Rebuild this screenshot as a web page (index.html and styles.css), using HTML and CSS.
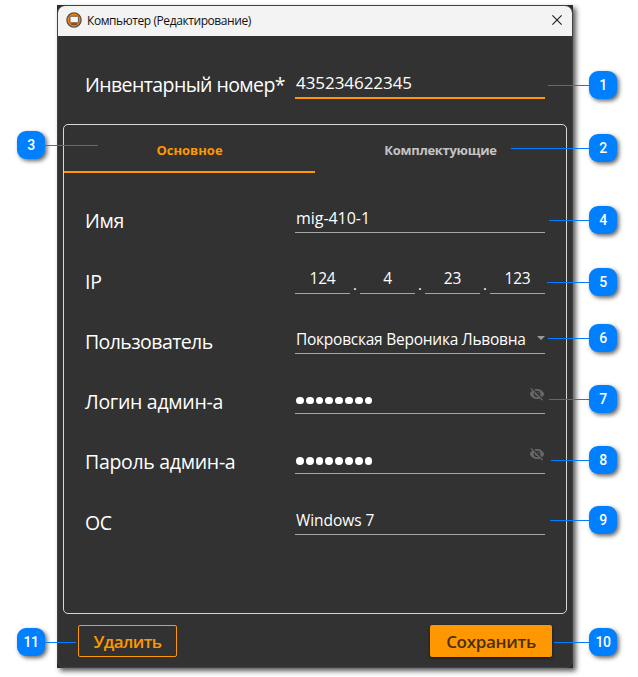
FILE: index.html
```html
<!DOCTYPE html>
<html lang="ru">
<head>
<meta charset="utf-8">
<title>Компьютер (Редактирование)</title>
<link rel="stylesheet" href="styles.css">
</head>
<body>
<svg class="defs" width="0" height="0">
  <symbol id="eye-off" viewBox="0 0 24 24"><path d="M11.83 9L15 12.16V12a3 3 0 0 0-3-3h-.17m-4.3.8l1.55 1.55c-.05.21-.08.42-.08.65a3 3 0 0 0 3 3c.22 0 .44-.03.65-.08l1.55 1.55c-.67.33-1.41.53-2.2.53a5 5 0 0 1-5-5c0-.79.2-1.53.53-2.2M2 4.27l2.28 2.28.45.45C3.08 8.3 1.78 10 1 12c1.73 4.39 6 7.5 11 7.5 1.55 0 3.03-.3 4.38-.84l.43.42L19.73 22 21 20.73 3.27 3M12 7a5 5 0 0 1 5 5c0 .64-.13 1.26-.36 1.82l2.93 2.93c1.5-1.25 2.7-2.89 3.43-4.75-1.73-4.39-6-7.5-11-7.5-1.4 0-2.74.25-4 .7l2.17 2.15C10.74 7.13 11.35 7 12 7z"/></symbol>
</svg>
<div class="window-back">
<main class="window">
  <header class="titlebar">
    <svg class="logo" viewBox="0 0 16 16"><circle cx="8" cy="8" r="7.1" fill="#ff7f0a" stroke="#54504a" stroke-width="1.3"/><rect x="4" y="4.2" width="8.4" height="6.6" rx=".8" fill="#f4f6f8" stroke="#5b4634" stroke-width=".9"/><path d="M5.3 12.2h5.6" stroke="#4a3a2c" stroke-width="1.3"/></svg>
    <span class="title">Компьютер (Редактирование)</span>
    <svg class="close" viewBox="0 0 10 10"><path d="M.4.4l9.2 9.2M9.6.4L.4 9.6" stroke="#1a1a1a" stroke-width="1.1"/></svg>
  </header>
  <div class="row number-row">
    <label class="label tight l-number">Инвентарный номер*</label>
    <div class="field active">435234622345</div>
  </div>
  <section class="panel">
    <nav class="tabs">
      <div class="tab selected">Основное</div>
      <div class="tab">Комплектующие</div>
    </nav>
    <div class="rows">
      <div class="row"><label class="label">Имя</label><div class="field name">mig-410-1</div></div>
      <div class="row"><label class="label">IP</label>
        <div class="ip">
          <div class="field octet">124</div><span class="dot">.</span>
          <div class="field octet">4</div><span class="dot">.</span>
          <div class="field octet">23</div><span class="dot">.</span>
          <div class="field octet">123</div>
        </div>
      </div>
      <div class="row"><label class="label tight">Пользователь</label><div class="field select"><span class="user">Покровская Вероника Львовна</span><svg class="arrow" viewBox="0 0 8 4"><path d="M0 0h8L4 4z" fill="#9a9a9a"/></svg></div></div>
      <div class="row"><label class="label">Логин админ-а</label><div class="field secret"><span class="dots"><i></i><i></i><i></i><i></i><i></i><i></i><i></i><i></i></span><svg class="eye"><use href="#eye-off"/></svg></div></div>
      <div class="row"><label class="label">Пароль админ-а</label><div class="field secret"><span class="dots"><i></i><i></i><i></i><i></i><i></i><i></i><i></i><i></i></span><svg class="eye"><use href="#eye-off"/></svg></div></div>
      <div class="row"><label class="label">ОС</label><div class="field os">Windows 7</div></div>
    </div>
  </section>
  <footer class="actions">
    <div class="btn outline">Удалить</div>
    <div class="btn solid">Сохранить</div>
  </footer>
</main>
</div>
<div class="callout c1"><i></i><b>1</b></div>
<div class="callout c2"><i></i><b>2</b></div>
<div class="callout left c3"><b>3</b><i></i></div>
<div class="callout c4"><i></i><b>4</b></div>
<div class="callout c5"><i></i><b>5</b></div>
<div class="callout c6"><i></i><b>6</b></div>
<div class="callout c7"><i></i><b>7</b></div>
<div class="callout c8"><i></i><b>8</b></div>
<div class="callout c9"><i></i><b>9</b></div>
<div class="callout c10"><i></i><b>10</b></div>
<div class="callout left c11"><b>11</b><i></i></div>
</body>
</html>
```
FILE: styles.css
```css
* { box-sizing: border-box; }
body {
  margin: 0;
  width: 638px;
  height: 677px;
  overflow: hidden;
  padding: 5px 0 0 57px;
  background: #fff;
  font-family: "Open Sans", "Noto Sans", sans-serif;
  position: relative;
}
.defs { display: block; position: absolute; }
.window-back {
  width: 516px;
  height: 663px;
  background: #2b2b2b;
  box-shadow: 3px 3px 5px rgba(0, 0, 0, .65);
}
.window {
  width: 516px;
  height: 663px;
  border: 1px solid #424242;
  border-radius: 8px;
  overflow: hidden;
  background: #323232;
  color: #fff;
  display: flex;
  flex-direction: column;
}
.titlebar {
  height: 30px;
  flex: none;
  background: #f3f3f3;
  color: #111;
  display: flex;
  align-items: center;
  padding: 0 10px 0 8px;
}
.logo { width: 16px; height: 16px; margin-right: 5px; margin-top: -2px; }
.title { font-size: 12px; letter-spacing: -.42px; flex: 1; white-space: nowrap; margin-top: -2px; }
.close { width: 10px; height: 10px; margin-top: -2px; }
.row {
  display: grid;
  grid-template-columns: 210px 250px;
  align-items: end;
  height: 60.3px;
}
.number-row { height: 63px; margin-left: 27px; flex: none; }
.label { font-size: 19.5px; line-height: 28px; margin-bottom: -2px; white-space: nowrap; letter-spacing: -.3px; }
.label.tight { letter-spacing: -.58px; }
.l-number { margin-bottom: 0; }
.field {
  font-size: 15px;
  line-height: 24px;
  height: 27px;
  padding-left: 1px;
  border-bottom: 1px solid #a5a5a5;
  white-space: nowrap;
}
.field.active { font-size: 17px; letter-spacing: -.05px; height: 28px; border-bottom: 2px solid #ff9800; }
.name { font-size: 16px; letter-spacing: -.05px; }
.os { font-size: 15.5px; letter-spacing: -.05px; }
.user { font-size: 15.5px; letter-spacing: -.25px; }
.panel {
  flex: none;
  width: 504px;
  height: 490px;
  margin: 25px 0 0 5px;
  border: 1px solid #d6d6d6;
  border-radius: 5px;
}
.tabs { display: flex; height: 48px; }
.tab {
  flex: 1;
  display: flex;
  justify-content: center;
  align-items: center;
  padding-top: 3px;
  font-size: 13px;
  font-weight: 700;
  letter-spacing: -.3px;
  color: #c4c4c4;
  border-bottom: 2px solid transparent;
}
.tab.selected { color: #ff9800; border-color: #ff9800; letter-spacing: 0; }
.rows { padding-left: 21px; }
.ip { display: flex; justify-content: space-between; align-items: flex-end; }
.octet { width: 55px; text-align: center; padding: 0; height: 28px; font-size: 15.5px; letter-spacing: -.2px; }
.dot { font-size: 15px; line-height: 20px; width: 10px; text-align: center; }
.select, .secret { display: flex; justify-content: space-between; }
.arrow { width: 8px; height: 4px; margin-top: 9px; }
.dots { display: flex; gap: 2px; padding-top: 9.5px; }
.dots i { width: 7.8px; height: 7.8px; border-radius: 50%; background: #fff; }
.eye { width: 16px; height: 16px; fill: #686868; margin-top: -1px; }
.actions {
  display: flex;
  justify-content: space-between;
  padding: 11px 20px 0 20px;
}
.btn {
  height: 32px;
  line-height: 34px;
  border-radius: 2px;
  text-align: center;
  font-size: 17px;
  font-weight: 600;
  letter-spacing: -.3px;
}
.outline { width: 99px; border: 1px solid #ff9800; color: #ff9800; line-height: 32px; letter-spacing: -.6px; }
.solid { width: 122px; background: #ff9800; color: #4a2f08; box-shadow: 0 1px 3px rgba(0, 0, 0, .6); }
/* Numbered markers lie over the window edges */
.callout {
  position: absolute;
  right: 21px;
  height: 28px;
  display: flex;
  align-items: center;
}
.callout i { flex: 1; height: 1px; background: #0080ff; }
.callout b {
  width: 28px;
  height: 28px;
  border-radius: 9px;
  background: #0080ff;
  color: #fff;
  text-align: center;
  font: 500 14px/28px Roboto, sans-serif;
  letter-spacing: -.5px;
  box-shadow: 2px 2px 4px rgba(0, 0, 0, .6);
}
.callout.left { right: auto; left: 17px; }
.c1 { top: 71px; width: 69px; }
.c2 { top: 134px; width: 106px; }
.c3 { top: 131px; width: 81px; }
.c4 { top: 206px; width: 68px; }
.c5 { top: 268px; width: 70px; }
.c6 { top: 324px; width: 69px; }
.c7 { top: 385px; width: 68px; }
.c8 { top: 446px; width: 66px; }
.c9 { top: 506px; width: 67px; }
.c10 { top: 628px; width: 63px; }
.c11 { top: 628px; width: 59px; }
```
